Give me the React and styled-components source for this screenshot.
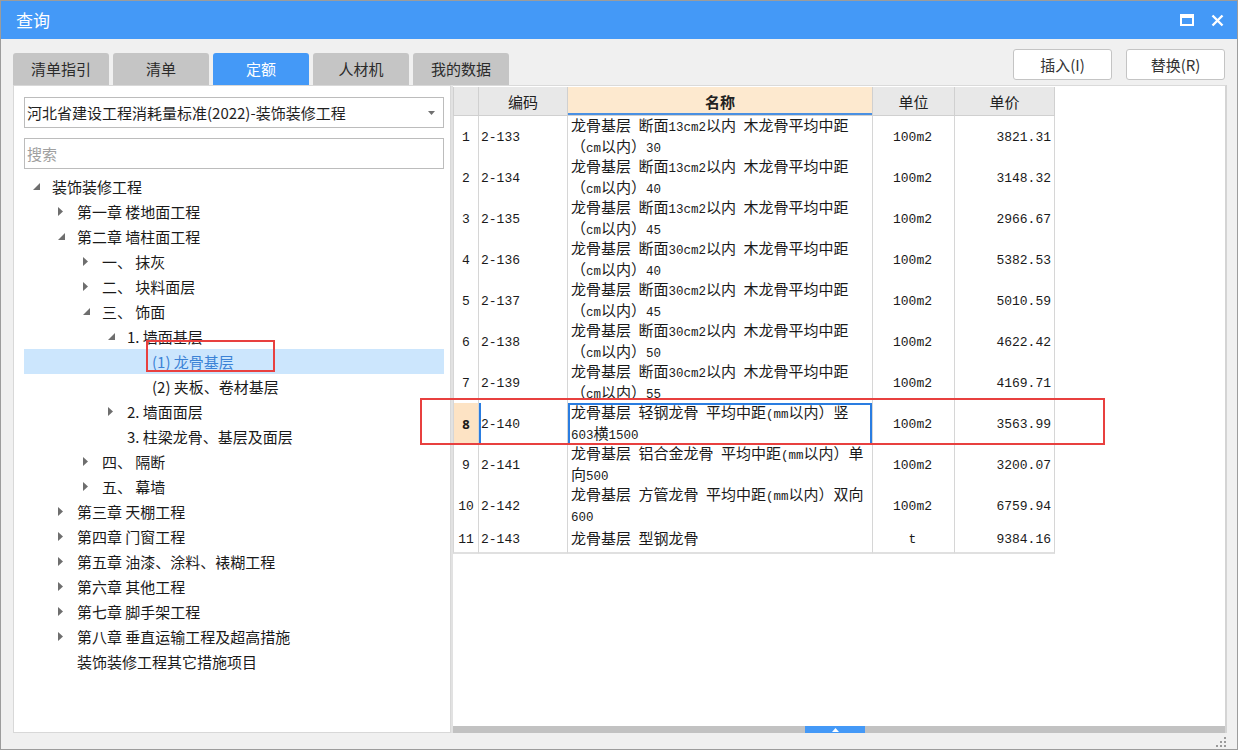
import React from 'react';
import styled, { createGlobalStyle, css } from 'styled-components';

const GlobalStyle = createGlobalStyle`
  html, body {
    margin: 0;
    padding: 0;
    background: #ffffff;
  }
  body {
    font-family: "Noto Sans CJK SC", "Noto Sans", sans-serif;
    color: #1f1f1f;
  }
  * {
    box-sizing: border-box;
  }
`;

const BLUE = '#4499f7';
const RED = '#e8403f';
const MONO = `"Liberation Mono", "Noto Sans CJK SC", monospace`;

const Window = styled.div`
  width: 1238px;
  height: 750px;
  border: 1px solid #9c9c9c;
  background: #f0f0f0;
  display: flex;
  flex-direction: column;
`;

const TitleBar = styled.div`
  height: 38px;
  flex-shrink: 0;
  background: ${BLUE};
  display: flex;
  align-items: center;
  padding: 0 4px 0 15px;
  color: #fff;
`;

const Title = styled.div`
  flex: 1;
  font-size: 17px;
  line-height: 38px;
`;

const TitleBtn = styled.div`
  width: 31px;
  height: 30px;
  display: flex;
  align-items: center;
  justify-content: center;
`;

const Body = styled.div`
  flex: 1;
  display: flex;
  flex-direction: column;
  padding: 0 10px 0 12px;
  min-height: 0;
`;

const TopRow = styled.div`
  height: 46px;
  flex-shrink: 0;
  display: flex;
  justify-content: space-between;
`;

const Tabs = styled.div`
  align-self: flex-end;
  display: flex;
  gap: 4px;
`;

const Tab = styled.div`
  width: 96px;
  height: 32px;
  border-radius: 3px 3px 0 0;
  display: flex;
  align-items: center;
  justify-content: center;
  padding-bottom: 1px;
  font-size: 15px;
  color: #2b2b2b;
  background: #c5c5c5;
  ${p => p.$active && css`
    background: ${BLUE};
    color: #fff;
  `}
`;

const Actions = styled.div`
  display: flex;
  gap: 14px;
  padding-top: 10px;
  padding-right: 2px;
`;

const Button = styled.div`
  width: 99px;
  height: 31px;
  background: #fff;
  border: 1px solid #c4c4c4;
  border-radius: 3px;
  display: flex;
  align-items: center;
  justify-content: center;
  font-size: 15px;
  color: #333;
`;

const Content = styled.div`
  height: 648px;
  flex-shrink: 0;
  display: flex;
`;

const LeftPanel = styled.div`
  width: 438px;
  background: #fff;
  border: 1px solid #d8d8d8;
  padding: 11px 6px 0 10px;
  display: flex;
  flex-direction: column;
`;

const Splitter = styled.div`
  width: 2px;
  background: #e2e2e2;
`;

const Field = styled.div`
  height: 31px;
  border: 1px solid #bcbcbc;
  background: #fff;
  display: flex;
  align-items: center;
  padding: 0 8px 0 2px;
  font-size: 15px;
  color: ${p => (p.$placeholder ? '#a0a0a0' : '#1f1f1f')};
  margin-bottom: ${p => p.$gap || 0}px;
`;

const FieldText = styled.span`
  flex: 1;
  white-space: nowrap;
`;

const Tree = styled.div`
  display: flex;
  flex-direction: column;
`;

const TreeRow = styled.div`
  position: relative;
  height: 25px;
  display: flex;
  align-items: center;
  padding-left: ${p => p.$level * 25}px;
  font-size: 15px;
  color: #1a1a1a;
  white-space: nowrap;
  ${p => p.$selected && css`
    background: #cce6fd;
    color: #3b82d6;
  `}
`;

const ArrowBox = styled.span`
  width: 28px;
  height: 25px;
  padding-left: 9px;
  display: flex;
  align-items: center;
`;

const RedBox = styled.div`
  position: absolute;
  border: 2px solid ${RED};
  pointer-events: none;
  z-index: 3;
`;

const RightPanel = styled.div`
  flex: 1;
  background: #fff;
  border-top: 1px solid #dadada;
  border-right: 2px solid #d4d4d4;
  display: flex;
  flex-direction: column;
`;

const GridArea = styled.div`
  flex: 1;
  padding-top: 1px;
`;

const GridRow = styled.div`
  position: relative;
  display: grid;
  grid-template-columns: 26px 89px 305px 82px 100px;
  width: 602px;
  height: ${p => p.$h}px;
`;

const Cell = styled.div`
  border-right: 1px solid #d6d6d6;
  border-bottom: 2px solid #e0e0e0;
  display: flex;
  align-items: center;
  justify-content: ${p => p.$align || 'flex-start'};
  padding: 0 ${p => (p.$align === 'flex-end' ? 3 : 2)}px 0 ${p => (p.$align === 'flex-start' || !p.$align ? 2 : 0)}px;
  font-family: ${MONO};
  font-size: 13px;
  color: #1a1a1a;
  background: #fff;
  ${p => p.$first && css`border-left: 1px solid #d6d6d6;`}
`;

const HeadCell = styled.div`
  border-right: 1px solid #d0d0d0;
  border-bottom: 1px solid #d0d0d0;
  background: ${p => (p.$hot ? '#fde9cf' : '#e8e8e8')};
  display: flex;
  align-items: center;
  justify-content: center;
  font-size: 15px;
  color: #222;
  font-weight: ${p => (p.$hot ? 700 : 400)};
  ${p => p.$hot && css`box-shadow: inset 0 -2px 0 #4a90e2;`}
  ${p => p.$first && css`border-left: 1px solid #d0d0d0;`}
`;

const NumCell = styled(Cell)`
  justify-content: center;
  padding: 0;
  font-size: 13px;
  ${p => p.$current && css`
    background: #fde3c4;
    font-weight: 700;
    font-family: "Noto Sans", sans-serif;
  `}
`;

const NameCell = styled(Cell)`
  flex-direction: column;
  align-items: flex-start;
  justify-content: center;
  padding-left: 3px;
  font-family: "Noto Sans CJK SC", sans-serif;
  font-size: 15px;
  line-height: 17px;
  ${p => p.$current && css`box-shadow: inset 0 0 0 2px #2a7de1;`}
`;

const CodeCell = styled(Cell)`
  ${p => p.$current && css`box-shadow: inset 2px 0 0 #2a7de1;`}
`;

const Line = styled.div`
  white-space: nowrap;
`;

const Ascii = styled.span`
  font-family: ${MONO};
  font-size: 12.5px;
`;

const ScrollTrack = styled.div`
  height: 7px;
  background: #c2c2c2;
  display: flex;
`;

const ScrollThumb = styled.div`
  margin-left: 352px;
  width: 60px;
  height: 7px;
  background: ${BLUE};
  display: flex;
  align-items: center;
  justify-content: center;
`;

const Footer = styled.div`
  flex: 1;
  display: flex;
  justify-content: flex-end;
  align-items: flex-end;
  padding: 0 1px 2px 0;
`;

const treeData = [
  { level: 0, label: '装饰装修工程', arrow: 'open' },
  { level: 1, label: '第一章 楼地面工程', arrow: 'closed' },
  { level: 1, label: '第二章 墙柱面工程', arrow: 'open' },
  { level: 2, label: '一、 抹灰', arrow: 'closed' },
  { level: 2, label: '二、 块料面层', arrow: 'closed' },
  { level: 2, label: '三、 饰面', arrow: 'open' },
  { level: 3, label: '1. 墙面基层', arrow: 'open' },
  { level: 4, label: '(1) 龙骨基层', selected: true },
  { level: 4, label: '(2) 夹板、卷材基层' },
  { level: 3, label: '2. 墙面面层', arrow: 'closed' },
  { level: 3, label: '3. 柱梁龙骨、基层及面层' },
  { level: 2, label: '四、 隔断', arrow: 'closed' },
  { level: 2, label: '五、 幕墙', arrow: 'closed' },
  { level: 1, label: '第三章 天棚工程', arrow: 'closed' },
  { level: 1, label: '第四章 门窗工程', arrow: 'closed' },
  { level: 1, label: '第五章 油漆、涂料、裱糊工程', arrow: 'closed' },
  { level: 1, label: '第六章 其他工程', arrow: 'closed' },
  { level: 1, label: '第七章 脚手架工程', arrow: 'closed' },
  { level: 1, label: '第八章 垂直运输工程及超高措施', arrow: 'closed' },
  { level: 1, label: '装饰装修工程其它措施项目' },
];

const wood = (size, dist) => [`龙骨基层 断面${size}cm2以内 木龙骨平均中距`, `（cm以内）${dist}`];

const rows = [
  { code: '2-133', name: wood(13, 30), unit: '100m2', price: '3821.31' },
  { code: '2-134', name: wood(13, 40), unit: '100m2', price: '3148.32' },
  { code: '2-135', name: wood(13, 45), unit: '100m2', price: '2966.67' },
  { code: '2-136', name: wood(30, 40), unit: '100m2', price: '5382.53' },
  { code: '2-137', name: wood(30, 45), unit: '100m2', price: '5010.59' },
  { code: '2-138', name: wood(30, 50), unit: '100m2', price: '4622.42' },
  { code: '2-139', name: wood(30, 55), unit: '100m2', price: '4169.71' },
  { code: '2-140', name: ['龙骨基层 轻钢龙骨 平均中距(mm以内）竖', '603横1500'], unit: '100m2', price: '3563.99', current: true },
  { code: '2-141', name: ['龙骨基层 铝合金龙骨 平均中距(mm以内）单', '向500'], unit: '100m2', price: '3200.07' },
  { code: '2-142', name: ['龙骨基层 方管龙骨 平均中距(mm以内）双向', '600'], unit: '100m2', price: '6759.94' },
  { code: '2-143', name: ['龙骨基层 型钢龙骨'], unit: 't', price: '9384.16' },
];

// half-width runs use the narrow mono face, like the original grid font
const Mixed = ({ text }) =>
  text.split(/([\x20-\x7e]+)/).map((part, i) =>
    /^[\x20-\x7e]+$/.test(part) ? <Ascii key={i}>{part}</Ascii> : <React.Fragment key={i}>{part}</React.Fragment>
  );

const Arrow = ({ type }) => {
  if (type === 'open') {
    return (
      <svg width="7" height="7" viewBox="0 0 7 7">
        <path d="M7 0 L7 7 L0 7 Z" fill="#6e6e6e" />
      </svg>
    );
  }
  if (type === 'closed') {
    return (
      <svg width="5" height="9" viewBox="0 0 5 9">
        <path d="M0 0 L5 4.5 L0 9 Z" fill="#6e6e6e" />
      </svg>
    );
  }
  return null;
};

const App = () => (
  <>
    <GlobalStyle />
    <Window>
      <TitleBar>
        <Title>查询</Title>
        <TitleBtn>
          <svg width="14" height="12" viewBox="0 0 14 12">
            <rect x="1" y="1" width="12" height="10" fill="none" stroke="#fff" strokeWidth="2" />
            <rect x="1" y="1" width="12" height="3" fill="#fff" />
          </svg>
        </TitleBtn>
        <TitleBtn>
          <svg width="13" height="13" viewBox="0 0 13 13">
            <path d="M1.5 1.5 L11.5 11.5 M11.5 1.5 L1.5 11.5" stroke="#fff" strokeWidth="2.4" />
          </svg>
        </TitleBtn>
      </TitleBar>
      <Body>
        <TopRow>
          <Tabs>
            {['清单指引', '清单', '定额', '人材机', '我的数据'].map(t => (
              <Tab key={t} $active={t === '定额'}>{t}</Tab>
            ))}
          </Tabs>
          <Actions>
            <Button>插入(I)</Button>
            <Button>替换(R)</Button>
          </Actions>
        </TopRow>
        <Content>
          <LeftPanel>
            <Field $gap={10}>
              <FieldText>河北省建设工程消耗量标准(2022)-装饰装修工程</FieldText>
              <svg width="7" height="4" viewBox="0 0 7 4">
                <path d="M0 0 L7 0 L3.5 4 Z" fill="#707070" />
              </svg>
            </Field>
            <Field $placeholder $gap={5}>
              <FieldText>搜索</FieldText>
            </Field>
            <Tree>
              {treeData.map(item => (
                <TreeRow key={item.label} $level={item.level} $selected={item.selected}>
                  <ArrowBox>
                    <Arrow type={item.arrow} />
                  </ArrowBox>
                  {item.label}
                  {item.selected && (
                    <RedBox style={{ left: 122, top: -9, width: 129, height: 32 }} />
                  )}
                </TreeRow>
              ))}
            </Tree>
          </LeftPanel>
          <Splitter />
          <RightPanel>
            <GridArea>
              <GridRow $h={29}>
                <HeadCell $first />
                <HeadCell>编码</HeadCell>
                <HeadCell $hot>名称</HeadCell>
                <HeadCell>单位</HeadCell>
                <HeadCell>单价</HeadCell>
              </GridRow>
              {rows.map((r, i) => (
                <GridRow key={r.code} $h={r.name.length > 1 ? 41 : 28}>
                  <NumCell $first $current={r.current}>{i + 1}</NumCell>
                  <CodeCell $current={r.current}>{r.code}</CodeCell>
                  <NameCell $current={r.current}>
                    {r.name.map(line => (
                      <Line key={line}><Mixed text={line} /></Line>
                    ))}
                  </NameCell>
                  <Cell $align="center">{r.unit}</Cell>
                  <Cell $align="flex-end">{r.price}</Cell>
                  {r.current && (
                    <RedBox style={{ left: -33, top: -5, width: 685, height: 47 }} />
                  )}
                </GridRow>
              ))}
            </GridArea>
            <ScrollTrack>
              <ScrollThumb>
                <svg width="7" height="4" viewBox="0 0 7 4">
                  <path d="M3.5 0 L7 4 L0 4 Z" fill="#fff" />
                </svg>
              </ScrollThumb>
            </ScrollTrack>
          </RightPanel>
        </Content>
        <Footer>
          <svg width="10" height="10" viewBox="0 0 10 10">
            <g fill="#9a9a9a">
              <rect x="8" y="0" width="2" height="2" />
              <rect x="8" y="4" width="2" height="2" />
              <rect x="4" y="4" width="2" height="2" />
              <rect x="8" y="8" width="2" height="2" />
              <rect x="4" y="8" width="2" height="2" />
              <rect x="0" y="8" width="2" height="2" />
            </g>
          </svg>
        </Footer>
      </Body>
    </Window>
  </>
);

export default App;
